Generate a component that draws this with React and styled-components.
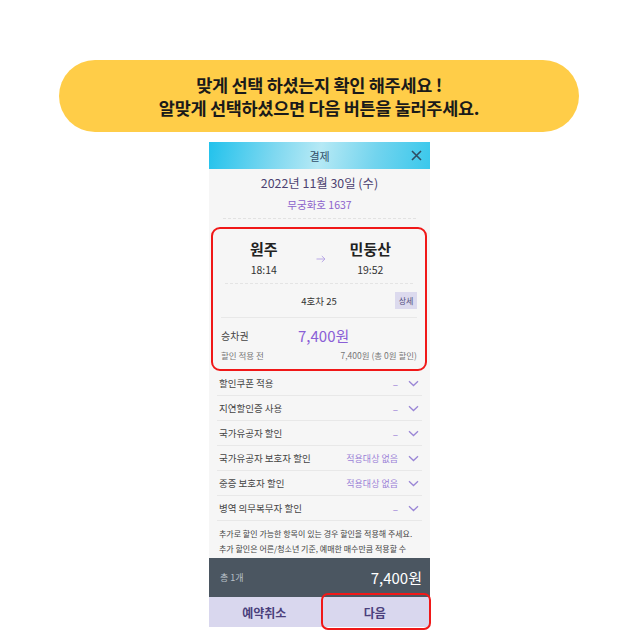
import React from 'react'
import styled, { createGlobalStyle } from 'styled-components'

const GlobalStyle = createGlobalStyle`
  html, body {
    margin: 0;
    padding: 0;
    background: #ffffff;
    font-family: "Noto Sans CJK KR", "Noto Sans", sans-serif;
  }
`

const discounts = [
  { label: '할인쿠폰 적용', value: '–', muted: true },
  { label: '지연할인증 사용', value: '–', muted: true },
  { label: '국가유공자 할인', value: '–', muted: true },
  { label: '국가유공자 보호자 할인', value: '적용대상 없음' },
  { label: '중증 보호자 할인', value: '적용대상 없음' },
  { label: '병역 의무복무자 할인', value: '–', muted: true }
]

const Chevron = () => (
  <svg width='11' height='7' viewBox='0 0 11 7'>
    <path d='M1 1.2 L5.5 5.5 L10 1.2' fill='none' stroke='#9a86d6' strokeWidth='1.3' />
  </svg>
)

export default function App() {
  return (
    <Page>
      <GlobalStyle />
      <Banner>
        <div>맞게 선택 하셨는지 확인 해주세요 !</div>
        <div>알맞게 선택하셨으면 다음 버튼을 눌러주세요.</div>
      </Banner>
      <Phone>
        <Header>
          <span>결제</span>
          <Close>
            <svg width='11' height='11' viewBox='0 0 11 11'>
              <path d='M1 1 L10 10 M10 1 L1 10' stroke='#2f4d63' strokeWidth='1.6' />
            </svg>
          </Close>
        </Header>
        <Body>
          <DateBlock>
            <DateText>2022년 11월 30일 (수)</DateText>
            <Train>무궁화호 1637</Train>
          </DateBlock>
          <TripCard>
            <Route>
              <Station>
                <Name>원주</Name>
                <Time>18:14</Time>
              </Station>
              <Arrow>
                <svg width='10' height='8' viewBox='0 0 10 8'>
                  <path d='M0.5 4 H9 M5.8 1 L9 4 L5.8 7' fill='none' stroke='#b9a8e6' strokeWidth='1' />
                </svg>
              </Arrow>
              <Station>
                <Name>민둥산</Name>
                <Time>19:52</Time>
              </Station>
            </Route>
            <SeatRow>
              <span>4호차 25</span>
              <DetailButton>상세</DetailButton>
            </SeatRow>
            <Fare>
              <FareRow>
                <FareLabel>승차권</FareLabel>
                <FarePrice>7,400원</FarePrice>
              </FareRow>
              <FareSub>
                <span>할인 적용 전</span>
                <span>7,400원 (총 0원 할인)</span>
              </FareSub>
            </Fare>
          </TripCard>
          <DiscountList>
            {discounts.map(d => (
              <DiscountRow key={d.label}>
                <span>{d.label}</span>
                <DiscountValue>
                  <ValueText $muted={d.muted}>{d.value}</ValueText>
                  <Chevron />
                </DiscountValue>
              </DiscountRow>
            ))}
          </DiscountList>
          <Note>
            추가로 할인 가능한 항목이 있는 경우 할인을 적용해 주세요.
            추가 할인은 어른/청소년 기준, 예매한 매수만큼 적용할 수 있습니다.
          </Note>
        </Body>
        <Total>
          <span>총 1개</span>
          <TotalPrice>7,400원</TotalPrice>
        </Total>
        <Actions>
          <ActionButton>예약취소</ActionButton>
          <ActionButton $highlight>다음</ActionButton>
        </Actions>
      </Phone>
    </Page>
  )
}

const Page = styled.div`
  width: 640px;
  height: 640px;
  display: flex;
  flex-direction: column;
  align-items: center;
  padding-top: 60px;
  box-sizing: border-box;
  overflow: hidden;
`

const Banner = styled.div`
  width: 520px;
  height: 72px;
  margin-left: -2px;
  border-radius: 36px;
  background: #ffcd48;
  display: flex;
  flex-direction: column;
  justify-content: center;
  align-items: center;
  font-size: 17.5px;
  font-weight: 700;
  line-height: 23px;
  color: #1a1a1a;
  letter-spacing: -0.3px;
`

const Phone = styled.div`
  width: 221px;
  margin-top: 10px;
  margin-left: -1px;
  display: flex;
  flex-direction: column;
  background: #f6f6f6;
`

const Header = styled.div`
  position: relative;
  height: 27px;
  display: flex;
  align-items: center;
  justify-content: center;
  background: linear-gradient(100deg, #22c2ec 0%, #7fd8f0 30%, #b6e9f5 50%, #72d4ee 75%, #3ac8ec 100%);
  font-size: 11px;
  color: #32506a;
`

const Close = styled.div`
  position: absolute;
  right: 8px;
  top: 8px;
  display: flex;
`

const Body = styled.div`
  height: 389px;
  overflow: hidden;
`

const DateBlock = styled.div`
  margin: 0 14px;
  height: 50px;
  box-sizing: border-box;
  padding-top: 5px;
  display: flex;
  flex-direction: column;
  align-items: center;
  border-bottom: 1px dashed #e2e2e2;
`

const DateText = styled.div`
  font-size: 12.4px;
  color: #4c4170;
  line-height: 18px;
`

const Train = styled.div`
  margin-top: 6px;
  font-size: 10.5px;
  color: #8d62cc;
  line-height: 14px;
`

const TripCard = styled.div`
  margin: 8px 3px 0 2px;
  border: 2px solid #f01818;
  border-radius: 9px;
  height: 140px;
  padding: 0 8px;
  display: flex;
  flex-direction: column;
`

const Route = styled.div`
  height: 55px;
  flex-shrink: 0;
  display: flex;
  align-items: flex-start;
  justify-content: space-between;
  padding: 10px 22px 0 25px;
  box-sizing: border-box;
  border-bottom: 1px dashed #e4e4e4;
  margin: 0 4px;
`

const Station = styled.div`
  display: flex;
  flex-direction: column;
  align-items: center;
`

const Name = styled.div`
  font-size: 15px;
  font-weight: 700;
  color: #222;
  line-height: 20px;
`

const Time = styled.div`
  font-size: 10.5px;
  color: #333;
  line-height: 14px;
  margin-top: 4px;
`

const Arrow = styled.div`
  padding-top: 5px;
  margin-left: 14px;
`

const SeatRow = styled.div`
  position: relative;
  height: 33px;
  flex-shrink: 0;
  display: flex;
  align-items: center;
  justify-content: center;
  font-size: 9.5px;
  color: #333;
  border-bottom: 1px solid #e8e8e8;
`

const DetailButton = styled.div`
  position: absolute;
  right: 0;
  top: 8px;
  width: 22px;
  height: 17px;
  background: #dcdaee;
  color: #4f4a7c;
  font-size: 8px;
  display: flex;
  align-items: center;
  justify-content: center;
`

const Fare = styled.div`
  display: flex;
  flex-direction: column;
  padding-top: 6px;
`

const FareRow = styled.div`
  display: flex;
  align-items: center;
  height: 22px;
`

const FareLabel = styled.span`
  width: 77px;
  font-size: 10px;
  color: #444;
`

const FarePrice = styled.span`
  font-size: 15px;
  color: #8a5fd6;
`

const FareSub = styled.div`
  display: flex;
  justify-content: space-between;
  font-size: 8.5px;
  color: #777;
  margin-top: 3px;
`

const DiscountList = styled.div`
  margin: 0 8px 0 8px;
`

const DiscountRow = styled.div`
  height: 24px;
  display: flex;
  align-items: center;
  justify-content: space-between;
  font-size: 9.5px;
  color: #444;
  border-bottom: 1px solid #e8e8e8;
  padding: 0 3px 0 2px;
`

const DiscountValue = styled.div`
  display: flex;
  align-items: center;
  gap: 10px;
`

const ValueText = styled.span`
  color: #9a7fd6;
  font-size: ${p => (p.$muted ? '10px' : '9px')};
`

const Note = styled.div`
  margin: 5px 16px 0 10px;
  font-size: 8px;
  line-height: 15px;
  color: #444;
  word-break: keep-all;
`

const Total = styled.div`
  height: 39px;
  background: #4b5661;
  display: flex;
  align-items: center;
  justify-content: space-between;
  padding: 0 8px 0 11px;
  color: #b8c0c8;
  font-size: 9px;
`

const TotalPrice = styled.span`
  color: #fff;
  font-size: 15px;
`

const Actions = styled.div`
  height: 30px;
  display: grid;
  grid-template-columns: 1fr 1fr;
  background: #d9d7ee;
`

const ActionButton = styled.div`
  position: relative;
  display: flex;
  align-items: center;
  justify-content: center;
  font-size: 12px;
  font-weight: 700;
  color: #4a3f7c;

  ${p =>
    p.$highlight &&
    `
    &::after {
      content: '';
      position: absolute;
      left: 1px;
      right: -1px;
      top: -4px;
      bottom: -3px;
      border: 2px solid #f01818;
      border-radius: 7px;
    }
  `}
`
